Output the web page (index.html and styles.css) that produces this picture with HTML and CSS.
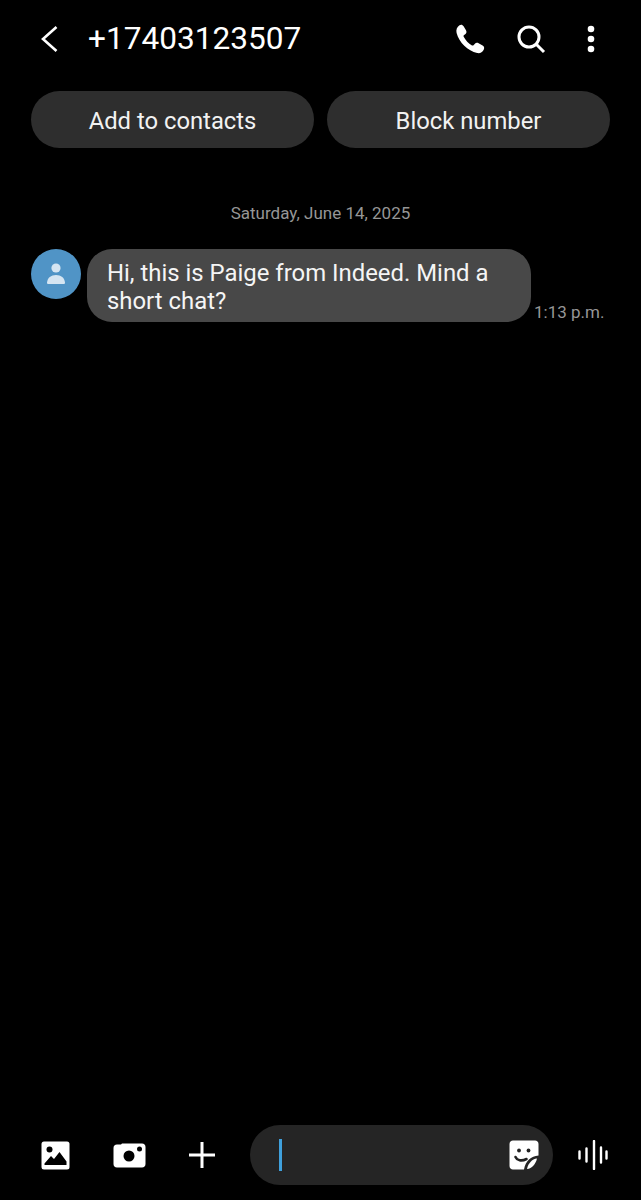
FILE: index.html
```html
<!DOCTYPE html>
<html lang="en">
<head>
  <meta charset="UTF-8" />
  <meta name="viewport" content="width=device-width, initial-scale=1.0"/>
  <title>+17403123507</title>
  <link rel="stylesheet" href="styles.css">
</head>
<body>
  <div class="app">
    <header class="top-bar">
      <svg class="back-icon" width="20" height="30" viewBox="0 0 20 30"><path d="M17.5 3 L4 15 L17.5 27" fill="none" stroke="#fff" stroke-width="2.6"/></svg>
      <h1 class="title">+17403123507</h1>
      <div class="top-actions">
        <svg width="32" height="32" viewBox="0 0 32 32"><path d="M5.5 2.2 C7 1.2 8.6 1.6 9.6 3.2 L12 7.2 C12.9 8.8 12.5 10.2 11.2 11.2 L9.8 12.3 C9.4 12.7 9.4 13.2 9.7 13.8 C11.6 17.4 14.4 20.4 18 22.4 C18.6 22.7 19.1 22.7 19.5 22.2 L20.7 20.9 C21.8 19.7 23.2 19.5 24.6 20.3 L28.6 22.6 C30.2 23.6 30.6 25.2 29.7 26.7 C28.3 29.3 26 30.6 23.2 30 C13.8 28 5 19.4 2.6 10 C1.8 6.8 3 3.9 5.5 2.2 Z" fill="#fff"/></svg>
        <svg width="30" height="30" viewBox="0 0 30 30"><circle cx="13" cy="13" r="10" fill="none" stroke="#fff" stroke-width="3"/><path d="M20.5 20.5 L28 28" stroke="#fff" stroke-width="3"/></svg>
        <svg class="more-icon" width="8" height="28" viewBox="0 0 8 28"><circle cx="4" cy="4" r="3.3" fill="#fff"/><circle cx="4" cy="14" r="3.3" fill="#fff"/><circle cx="4" cy="24" r="3.3" fill="#fff"/></svg>
      </div>
    </header>

    <div class="quick-actions">
      <button class="pill-btn">Add to contacts</button>
      <button class="pill-btn">Block number</button>
    </div>

    <div class="date-line">Saturday, June 14, 2025</div>

    <div class="message">
      <div class="avatar">
        <svg width="18" height="22" viewBox="0 0 18 22"><circle cx="9" cy="5" r="4.6" fill="#d5e5f2"/><path d="M1 21 C0 21 0 20.4 0 19.6 C0.4 14.8 4 12 9 12 C14 12 17.6 14.8 18 19.6 C18 20.4 18 21 17 21 Z" fill="#d5e5f2"/></svg>
      </div>
      <div class="bubble">Hi, this is Paige from Indeed. Mind a short chat?</div>
      <div class="time">1:13 p.m.</div>
    </div>

    <footer class="composer">
      <svg class="gallery-icon" width="29" height="29" viewBox="0 0 29 29"><rect x="0.5" y="0.5" width="28" height="28" rx="2.5" fill="#fff"/><circle cx="8.5" cy="8.5" r="3" fill="#000"/><path d="M3.5 24 L3.5 22.5 L10 15 L13 18 L18.5 11 L25.5 20.5 L25.5 24 Z" fill="#000"/></svg>
      <svg class="camera-icon" width="33" height="25" viewBox="0 0 33 25"><path d="M4 1.5 H8 L9 0.5 H29 C31.2 0.5 32.5 2 32.5 4 V21 C32.5 23 31.2 24.5 29 24.5 H4 C1.8 24.5 0.5 23 0.5 21 V5 C0.5 3 1.8 1.5 4 1.5 Z" fill="#fff"/><circle cx="16" cy="13" r="5.5" fill="#000"/><circle cx="26.5" cy="6" r="2.5" fill="#000"/></svg>
      <svg class="plus-icon" width="28" height="28" viewBox="0 0 28 28"><path d="M14 1 V27 M1 14 H27" stroke="#fff" stroke-width="3"/></svg>
      <div class="input-pill">
        <span class="cursor"></span>
        <svg class="sticker-icon" width="30" height="30" viewBox="0 0 30 30"><path d="M4 0.5 H26 C28 0.5 29.5 2 29.5 4 V15.5 C22 16 16.5 21 15 29.5 H4 C2 29.5 0.5 28 0.5 26 V4 C0.5 2 2 0.5 4 0.5 Z" fill="#fff"/><path d="M28 18.5 C23 19 19 23.5 18 29 C23 28.5 26.5 24.5 28 18.5 Z" fill="#fff"/><circle cx="10" cy="10.5" r="1.9" fill="#222"/><circle cx="19.5" cy="10.5" r="1.9" fill="#222"/><path d="M6.5 17 C8 20.5 12.5 21.5 17.5 19" fill="none" stroke="#222" stroke-width="2.6" stroke-linecap="round"/></svg>
      </div>
      <svg class="voice-icon" width="30" height="30" viewBox="0 0 30 30"><path d="M1.5 11.5 V18.5 M8.5 8.5 V21.5 M16 1 V29 M23 7.5 V22.5 M28.5 11.5 V18.5" stroke="#fff" stroke-width="2.4" stroke-linecap="round"/></svg>
    </footer>
  </div>
</body>
</html>
```

FILE: styles.css
```css
html, body {
  margin: 0;
  padding: 0;
  background: #000;
  color: #fff;
  font-family: 'Roboto', sans-serif;
}

.app {
  display: flex;
  flex-direction: column;
  height: 1200px;
  overflow: hidden;
}

.top-bar {
  display: flex;
  align-items: center;
  height: 77px;
  padding: 0 46px 0 39px;
}

.back-icon {
  flex: none;
  margin-right: 29px;
}

.title {
  margin: 0;
  font-size: 31.6px;
  font-weight: 400;
}

.top-actions {
  display: flex;
  align-items: center;
  gap: 30px;
  margin-left: auto;
}

.more-icon {
  margin-left: 11px;
}

.quick-actions {
  display: flex;
  gap: 13px;
  margin-top: 14px;
  padding: 0 31px;
}

.pill-btn {
  flex: 1;
  height: 57px;
  padding: 2px 0 0;
  background: #2e2e2e;
  border: none;
  border-radius: 29px;
  color: #f2f2f2;
  font-family: inherit;
  font-size: 23.8px;
}

.date-line {
  margin-top: 54px;
  text-align: center;
  font-size: 17px;
  line-height: 22px;
  color: #969696;
}

.message {
  display: flex;
  align-items: flex-start;
  margin-top: 25px;
  padding-left: 31px;
}

.avatar {
  display: flex;
  align-items: center;
  justify-content: center;
  flex: none;
  width: 50px;
  height: 50px;
  margin-right: 6px;
  background: #5094c6;
  border-radius: 50%;
}

.bubble {
  box-sizing: border-box;
  width: 444px;
  height: 73px;
  padding: 10px 20px;
  background: #484848;
  border-radius: 25px;
  font-size: 23.9px;
  line-height: 28px;
  color: #f5f5f5;
}

.time {
  align-self: flex-end;
  margin-left: 3px;
  font-size: 17px;
  line-height: 20px;
  white-space: nowrap;
  color: #969696;
}

.composer {
  display: flex;
  align-items: center;
  margin-top: auto;
  height: 60px;
  margin-bottom: 15px;
  padding-left: 41px;
}

.camera-icon {
  margin-left: 43px;
}

.plus-icon {
  margin-left: 42px;
}

.input-pill {
  display: flex;
  align-items: center;
  justify-content: space-between;
  box-sizing: border-box;
  width: 303px;
  height: 60px;
  margin-left: 34px;
  padding: 0 14px 0 29px;
  background: #252525;
  border-radius: 30px;
}

.cursor {
  width: 3px;
  height: 32px;
  background: #3fa0dc;
}

.voice-icon {
  margin-left: 25px;
}
```
